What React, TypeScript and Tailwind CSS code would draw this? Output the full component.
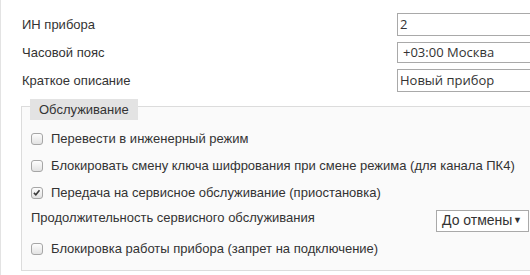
import React from 'react'

const rows = [
  { label: 'ИН прибора', value: '2', kind: 'input' },
  { label: 'Часовой пояс', value: '+03:00 Москва', kind: 'select' },
  { label: 'Краткое описание', value: 'Новый прибор', kind: 'input' },
]

function Checkbox({ checked }: { checked?: boolean }) {
  return (
    <span className="relative inline-block w-[12px] h-[12px] rounded-[3px] border border-[#a6a6a6] bg-gradient-to-b from-[#fdfdfd] to-[#e2e2e2] shrink-0">
      {checked && (
        <svg viewBox="0 0 12 12" className="absolute left-[0px] top-[0px] w-[10px] h-[10px]">
          <path d="M2.3 5.8 L4.6 8.2 L9 2.6" fill="none" stroke="#3a3a3a" strokeWidth="1.9" />
        </svg>
      )}
    </span>
  )
}

function CheckRow({ text, checked }: { text: string; checked?: boolean }) {
  return (
    <div className="flex items-center h-[27px] gap-[8px]">
      <Checkbox checked={checked} />
      <span className="whitespace-nowrap">{text}</span>
    </div>
  )
}

export default function App() {
  return (
    <div className="w-[530px] h-[275px] overflow-hidden bg-white border-l border-[#e3e3e3] font-['Liberation_Sans',Arial,sans-serif] text-[13px] text-[#333]">
      <div className="w-[620px] pt-[13px] pl-[20px]">
        <div className="flex flex-col gap-[6px]">
          {rows.map((r) => (
            <div key={r.label} className="flex items-center">
              <div className="w-[376px] pl-px">{r.label}</div>
              <div
                className={`w-[200px] border border-[#a9a9a9] bg-white font-['Open_Sans',sans-serif] text-[13px] flex items-center ${
                  r.kind === 'select' ? 'h-[21px] pl-[5px]' : 'h-[23px] pl-[2px]'
                }`}
              >
                {r.value}
              </div>
            </div>
          ))}
        </div>

        <fieldset className="mt-[1px] border border-[#dcdcdc] bg-[#fafafa] pl-[9px] pr-2 pb-[8px] w-[560px]">
          <legend className="pt-[6px] -ml-px">
            <span className="block h-[21px] leading-[21px] px-[9px] bg-[#e3e3e3]">Обслуживание</span>
          </legend>
          <div className="mt-[5px] flex flex-col">
            <CheckRow text="Перевести в инженерный режим" />
            <CheckRow text="Блокировать смену ключа шифрования при смене режима (для канала ПК4)" />
            <CheckRow text="Передача на сервисное обслуживание (приостановка)" checked />
            <div className="flex items-center h-[29px]">
              <span className="w-[405px] pb-[6px]">Продолжительность сервисного обслуживания</span>
              <div className="w-[93px] h-[22px] border border-[#a9a9a9] bg-white flex items-center justify-between pl-[5px] pr-[6px] text-[14px]">
                <span>До отмены</span>
                <span className="text-[9px] text-[#333]">▼</span>
              </div>
            </div>
            <CheckRow text="Блокировка работы прибора (запрет на подключение)" />
          </div>
        </fieldset>
      </div>
    </div>
  )
}
